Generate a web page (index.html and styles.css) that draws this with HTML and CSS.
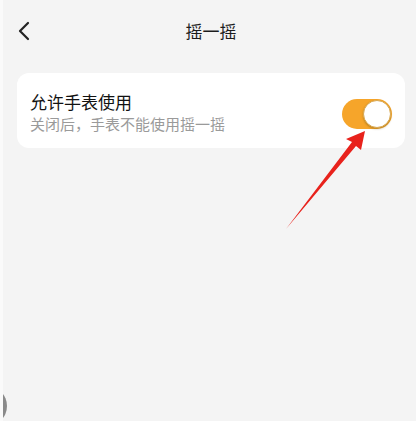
FILE: index.html
```html
<!DOCTYPE html>
<html lang="zh-CN">
<head>
    <meta charset="UTF-8">
    <meta name="viewport" content="width=device-width, initial-scale=1.0">
    <title>摇一摇</title>
    <link rel="stylesheet" href="styles.css">
</head>
<body>
    <header class="topbar">
        <button class="back" aria-label="返回">
            <svg width="14" height="20" viewBox="0 0 14 20">
                <path d="M11 2 L3 10 L11 18" fill="none" stroke="#222" stroke-width="2.2" stroke-linecap="round" stroke-linejoin="round"/>
            </svg>
        </button>
        <h1 class="title">摇一摇</h1>
    </header>

    <main class="content">
        <div class="card">
            <div class="card-text">
                <div class="card-title">允许手表使用</div>
                <div class="card-desc">关闭后，手表不能使用摇一摇</div>
            </div>
            <label class="switch">
                <input type="checkbox" checked>
                <span class="knob"></span>
            </label>
        </div>
    </main>

    <!-- annotation arrow -->
    <svg class="arrow" width="416" height="421" viewBox="0 0 416 421">
        <polygon points="365,131 361,150 356,146 286,229 352,142 346,139" fill="#e8221c"/>
    </svg>

    <div class="float-btn"></div>
</body>
</html>
```

FILE: styles.css
```css
* {
    margin: 0;
    padding: 0;
    box-sizing: border-box;
}

body {
    font-family: "Noto Sans CJK SC", "Noto Sans", sans-serif;
    background: #f4f4f4;
    border-left: 3px solid #fafafa;
    height: 421px;
    overflow: hidden;
    position: relative;
}

/* Top bar */
.topbar {
    height: 60px;
    display: flex;
    align-items: center;
    justify-content: center;
    position: relative;
}

.back {
    position: absolute;
    left: 14px;
    top: 21px;
    background: none;
    border: none;
    width: 14px;
    height: 20px;
    display: flex;
}

.title {
    font-size: 17px;
    font-weight: normal;
    color: #1c1c1c;
    margin-left: 3px;
}

/* Settings card */
.content {
    padding: 13px 11px 0 14px;
}

.card {
    background: #fff;
    border-radius: 12px;
    padding: 18px 13px 14px 13px;
    display: flex;
    align-items: center;
    justify-content: space-between;
}

.card-title {
    font-size: 17px;
    line-height: 22px;
    color: #111;
}

.card-desc {
    font-size: 15px;
    line-height: 20px;
    margin-top: 1px;
    color: #9a9a9a;
}

/* Toggle */
.switch {
    width: 50px;
    height: 30px;
    border-radius: 15px;
    background: #f6a52a;
    position: relative;
    margin-top: 3px;
}

.switch input {
    display: none;
}

.knob {
    position: absolute;
    right: 1px;
    top: 1px;
    width: 28px;
    height: 28px;
    border-radius: 50%;
    background: #fff;
    border: 1px solid #d9a850;
    box-shadow: 0 1px 2px rgba(120, 90, 20, 0.45);
}

/* Overlays */
.arrow {
    position: absolute;
    left: -3px;
    top: 0;
    pointer-events: none;
}

.float-btn {
    position: absolute;
    left: -36px;
    top: 386px;
    width: 40px;
    height: 40px;
    border-radius: 50%;
    background: #8a8a8a;
}
```
